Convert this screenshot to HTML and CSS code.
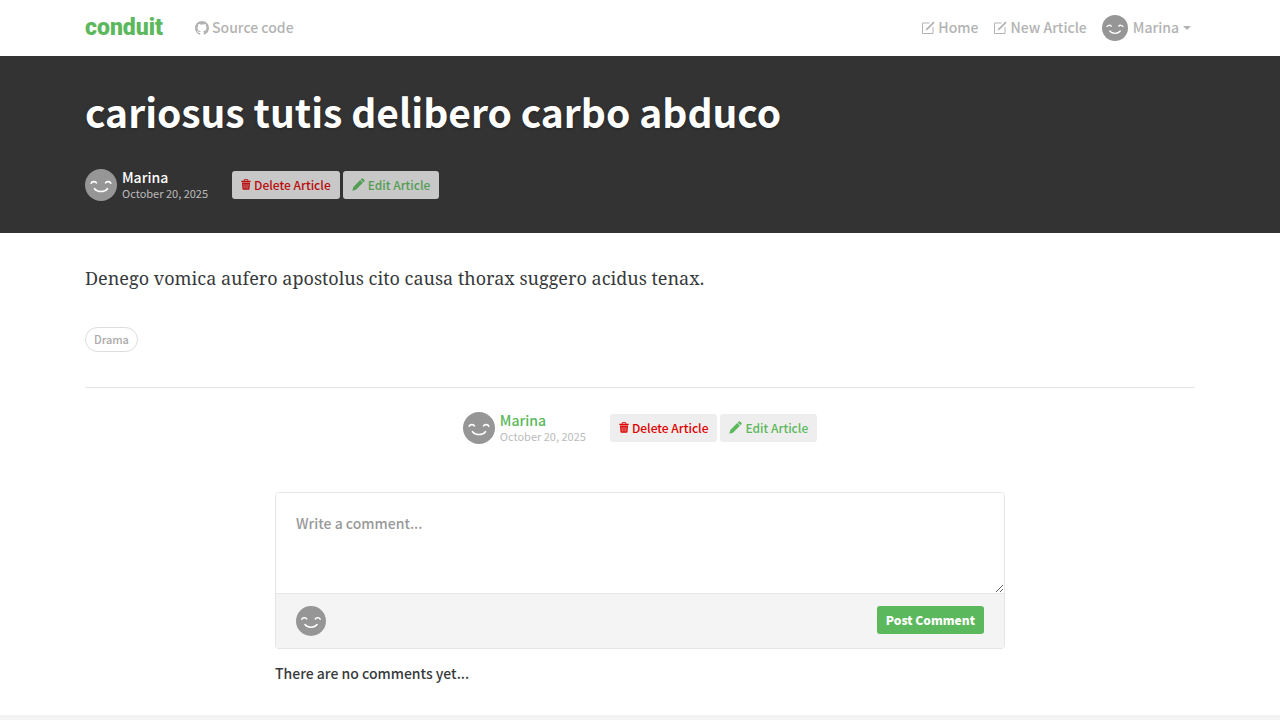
FILE: index.html
```html
<!DOCTYPE html>
<html lang="en">
<head>
<meta charset="utf-8">
<meta name="viewport" content="width=device-width, initial-scale=1">
<title>cariosus tutis delibero carbo abduco — Conduit</title>
<link rel="stylesheet" href="styles.css">
</head>
<body>
<svg class="sprite" aria-hidden="true">
  <symbol id="smiley" viewBox="0 0 32 32">
    <circle cx="16" cy="16" r="16" fill="#969696"/>
    <path d="M6.200 14.200c.8-2 4.400-2 5.200-.4M20.600 13.800c.8-1.600 4.400-1.600 5.200.4M9.500 19.700c3 3.800 10 3.800 13 0" fill="none" stroke="#fff" stroke-width="1.600" stroke-linecap="round"/>
  </symbol>
  <symbol id="github" viewBox="0 0 16 16">
    <path fill="currentColor" d="M8 0C3.580 0 0 3.580 0 8c0 3.540 2.290 6.530 5.470 7.590.4.070.55-.17.55-.38 0-.19-.01-.82-.01-1.490-2.010.37-2.530-.49-2.690-.94-.09-.23-.48-.94-.82-1.130-.28-.15-.68-.52-.01-.53.63-.01 1.080.58 1.230.82.72 1.210 1.870.87 2.330.66.07-.52.28-.87.51-1.070-1.780-.2-3.640-.89-3.640-3.950 0-.87.31-1.590.82-2.150-.08-.2-.36-1.020.08-2.120 0 0 .67-.21 2.200.82A7.600 7.600 0 0 1 8 3.870c.68 0 1.360.09 2 .27 1.530-1.040 2.200-.82 2.200-.82.44 1.100.16 1.920.08 2.120.51.56.82 1.270.82 2.150 0 3.070-1.870 3.750-3.650 3.950.29.25.54.73.54 1.480 0 1.070-.01 1.930-.01 2.200 0 .21.15.46.55.38A8 8 0 0 0 16 8c0-4.420-3.580-8-8-8z"/>
  </symbol>
  <symbol id="compose" viewBox="0 0 14 14">
    <path d="M8.500 2H1.500v10.500H12V6" fill="none" stroke="currentColor"/>
    <path d="M12.400.4l1.300 1.300-7 7-2.100.8.800-2.100z" fill="currentColor"/>
  </symbol>
  <symbol id="trash" viewBox="0 0 11 12">
    <path fill="currentColor" fill-rule="evenodd" d="M3 1.800V1q0-.9.900-.9h3.200q.9 0 .9.900v.8h2.600v1.500H.4V1.800zm1 0h3v-.8H4zM1 3.900h9l-.7 7q0 .8-.8.800h-6q-.8 0-.8-.8zm1.900 1.200.3 5.400h.6l-.3-5.400zm2.300 0v5.400h.6V5.100zm2.300 0-.3 5.400h.6l.3-5.400z"/>
  </symbol>
  <symbol id="pencil" viewBox="0 0 13 13">
    <path fill="currentColor" d="M.3 12.700l1-3.700 6.900-6.900 2.700 2.700L4 11.700zM8.700 1.600l1.100-1.100q.6-.6 1.200 0l1.500 1.500q.6.600 0 1.200l-1.100 1.100z"/>
  </symbol>
</svg>

<nav class="navbar">
  <div class="container navbar-inner">
    <a class="brand" href="#">conduit</a>
    <a class="nav-link" href="#"><svg class="icon-nav"><use href="#github"/></svg><span class="label">Source code</span></a>
    <div class="nav-right">
      <a class="nav-link" href="#"><svg class="icon-nav"><use href="#compose"/></svg><span class="label">Home</span></a>
      <a class="nav-link" href="#"><svg class="icon-nav"><use href="#compose"/></svg><span class="label">New Article</span></a>
      <button class="nav-link" type="button"><svg class="avatar-nav"><use href="#smiley"/></svg><span class="label">Marina</span><span class="caret"></span></button>
    </div>
  </div>
</nav>

<main>
  <header class="banner">
    <div class="container">
      <h1 class="title">cariosus tutis delibero carbo abduco</h1>
      <div class="meta">
        <svg class="avatar"><use href="#smiley"/></svg>
        <div class="info"><a class="author" href="#">Marina</a><span class="date">October 20, 2025</span></div>
        <div class="actions">
          <button class="btn btn-delete" type="button"><svg class="icon-trash"><use href="#trash"/></svg>Delete Article</button>
          <button class="btn btn-edit" type="button"><svg class="icon-pencil"><use href="#pencil"/></svg>Edit Article</button>
        </div>
      </div>
    </div>
  </header>

  <div class="container article">
    <p class="article-text">Denego vomica aufero apostolus cito causa thorax suggero acidus tenax.</p>
    <ul class="tags"><li class="tag">Drama</li></ul>
    <hr class="rule">
    <div class="meta meta-center">
      <svg class="avatar"><use href="#smiley"/></svg>
      <div class="info"><a class="author" href="#">Marina</a><span class="date">October 20, 2025</span></div>
      <div class="actions">
        <button class="btn btn-delete" type="button"><svg class="icon-trash"><use href="#trash"/></svg>Delete Article</button>
        <button class="btn btn-edit" type="button"><svg class="icon-pencil"><use href="#pencil"/></svg>Edit Article</button>
      </div>
    </div>
    <section class="comments">
      <form class="comment-form">
        <textarea class="comment-input" rows="3" placeholder="Write a comment..." aria-label="Write a comment"></textarea>
        <div class="comment-footer">
          <svg class="avatar-comment"><use href="#smiley"/></svg>
          <button class="btn btn-primary" type="button">Post Comment</button>
        </div>
      </form>
      <p class="empty">There are no comments yet...</p>
    </section>
  </div>
</main>
<footer class="footer"></footer>
</body>
</html>
```
FILE: styles.css
```css
* { box-sizing: border-box; }

body {
  margin: 0;
  min-height: 100vh;
  display: flex;
  flex-direction: column;
  background: #fff;
  color: #373a3c;
  font-family: "Noto Sans CJK SC", "Noto Sans", sans-serif;
  font-size: 14px;
  font-weight: 500;
  line-height: 24px;
}

a { color: inherit; text-decoration: none; }
button, textarea { font: inherit; }
svg { flex: none; }

.sprite { position: absolute; width: 0; height: 0; }

.container {
  width: 100%;
  max-width: 1140px;
  margin: 0 auto;
  padding: 0 15px;
}

.navbar-inner { display: flex; align-items: center; height: 56px; }

.brand {
  margin-right: 32px;
  padding-bottom: 1px;
  color: #5cb85c;
  font-size: 23px;
  font-weight: 900;
  font-family: "Roboto", sans-serif;
}

.nav-link {
  display: flex;
  align-items: center;
  padding: 0;
  border: 0;
  background: none;
  color: #b3b3b3;
}

.label { padding-bottom: 2px; }
.nav-right { display: flex; gap: 15px; margin-left: auto; padding-right: 4px; }
.icon-nav { width: 14px; height: 14px; margin-right: 3px; }
.avatar-nav { width: 26px; height: 26px; margin-right: 5px; }

.caret {
  margin-left: 4px;
  border: 4px solid transparent;
  border-top-color: currentColor;
  border-bottom: 0;
}

.banner { padding: 31px 0 32px; background: #333; color: #fff; }

.title {
  margin: 0 0 33px;
  font-size: 39px;
  line-height: 49px;
  font-weight: 700;
  text-shadow: 0 1px 3px rgba(0, 0, 0, 0.3);
}

.meta { display: flex; align-items: center; }
.meta-center { justify-content: center; }
.avatar { width: 32px; height: 32px; margin-right: 5px; }
.info { display: flex; flex-direction: column; margin-right: 24px; line-height: 16px; }
.date { color: #bbb; font-size: 11px; font-weight: 400; }
.meta-center .author { color: #5cb85c; }

.actions { display: flex; gap: 3px; }

.btn {
  display: flex;
  align-items: center;
  height: 28px;
  padding: 0 9px 1px;
  border: 0;
  border-radius: 3px;
  background: #eee;
  font-size: 12px;
}

.btn-delete { color: #d00; }
.btn-edit { color: #5cb85c; }
.banner .btn { opacity: 0.8; }
.icon-trash { width: 10px; height: 11px; margin-right: 3px; }
.icon-pencil { width: 13px; height: 13px; margin-right: 3px; }

.article { padding-top: 29px; }

.article-text {
  margin: 0 0 32px;
  font-family: "Source Serif Pro", "Noto Serif", "Liberation Serif", serif;
  font-size: 18px;
  font-weight: 400;
  line-height: 33px;
}

.tags { display: flex; margin: 0; padding: 0; list-style: none; }

.tag {
  padding: 0 8px;
  border: 1px solid #ddd;
  border-radius: 13px;
  color: #aaa;
  font-size: 11px;
  line-height: 23px;
}

.rule {
  width: 100%;
  margin: 35px 0 24px;
  border: 0;
  border-top: 1px solid #e3e3e3;
}

.comments { max-width: 730px; margin: 48px auto 0; }

.comment-form {
  border: 1px solid #e5e5e5;
  border-radius: 4px;
  overflow: hidden;
}

.comment-input {
  display: block;
  width: 100%;
  height: 100px;
  padding: 18px 20px;
  border: 0;
  outline: 0;
  resize: vertical;
}

.comment-input::placeholder { color: #999; }

.comment-footer {
  display: flex;
  align-items: flex-start;
  justify-content: space-between;
  padding: 12px 20px;
  border-top: 1px solid #e5e5e5;
  background: #f4f4f4;
}

.avatar-comment { width: 30px; height: 30px; }
.btn-primary { background: #5cb85c; color: #fff; font-weight: 900; }

.empty { margin: 12px 0 30px; }
.footer { flex: 1; background: #f3f3f3; }
```
